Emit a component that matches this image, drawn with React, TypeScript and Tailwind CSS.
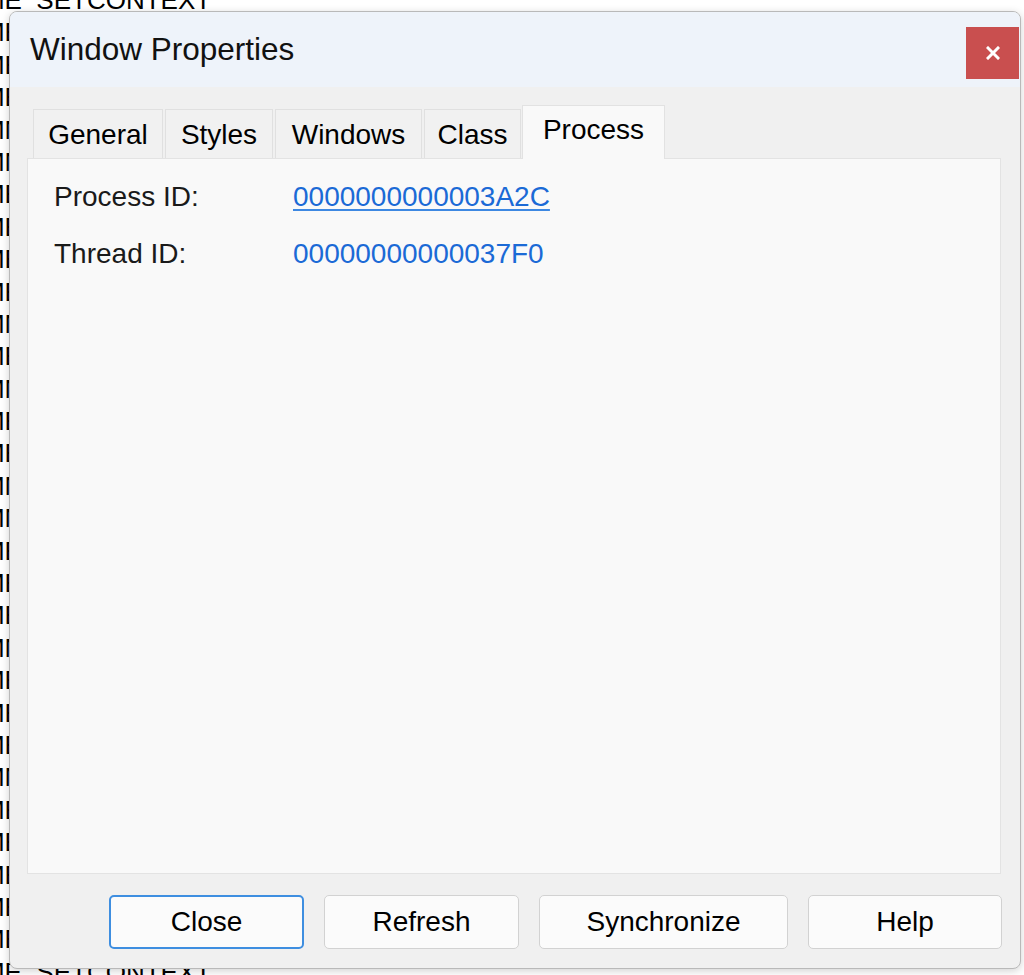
import { useState } from 'react';

const logLines = [
  'WM_IME_SETCONTEXT',
  'WM_IME_NOTIFY',
  'WM_IME_SETCONTEXT',
  'WM_IME_NOTIFY',
  'WM_IMM_ACTIVATE',
  'WM_IMM_ACTIVATE',
  'WM_IME_SETCONTEXT',
  'WM_IME_NOTIFY',
  'WM_IME_SETCONTEXT',
  'WM_IME_NOTIFY',
  'WM_IMM_ACTIVATE',
  'WM_IME_NOTIFY',
  'WM_IMM_ACTIVATE',
  'WM_IME_SETCONTEXT',
  'WM_IME_NOTIFY',
  'WM_IMM_ACTIVATE',
  'WM_IMM_ACTIVATE',
  'WM_IME_NOTIFY',
  'WM_IME_SETCONTEXT',
  'WM_IME_NOTIFY',
  'WM_IMM_ACTIVATE',
  'WM_IME_NOTIFY',
  'WM_IME_SETCONTEXT',
  'WM_IME_NOTIFY',
  'WM_IMM_ACTIVATE',
  'WM_IME_NOTIFY',
  'WM_IME_SETCONTEXT',
  'WM_IME_SETCONTEXT',
  'WM_IME_NOTIFY',
  'WM_IME_SETCONTEXT',
  'WM_IME_SETCONTEXT',
];

const tabs = [
  { name: 'General', w: 'w-[130px]', ml: '' },
  { name: 'Styles', w: 'w-[108px]', ml: 'ml-[2px]' },
  { name: 'Windows', w: 'w-[147px]', ml: 'ml-[2px]' },
  { name: 'Class', w: 'w-[97px]', ml: 'ml-[2px]' },
  { name: 'Process', w: 'w-[143px]', ml: 'ml-[1px]' },
];

const buttons = [
  { label: 'Close', w: 'w-[195px]', primary: true },
  { label: 'Refresh', w: 'w-[195px]', primary: false },
  { label: 'Synchronize', w: 'w-[249px]', primary: false },
  { label: 'Help', w: 'w-[194px]', primary: false },
];

export default function App() {
  const [activeTab, setActiveTab] = useState('Process');
  const last = logLines.length - 1;

  return (
    <div className="relative w-[1024px] h-[975px] bg-white overflow-hidden font-['Liberation_Sans',Arial,sans-serif] text-black">
      {/* message log behind the dialog: only the strip left of the dialog shows */}
      <div className="absolute left-0 top-[-16px] flex flex-col">
        {logLines.map((line, i) => (
          <div
            key={i}
            className={
              i === 0 || i === last
                ? 'h-[32.4px] leading-[32.4px] text-[26px] whitespace-nowrap w-[240px] overflow-hidden'
                : 'h-[32.4px] leading-[32.4px] text-[26px] whitespace-nowrap w-[9px] overflow-hidden'
            }
          >
            <span className="block ml-[-85px]">{line}</span>
          </div>
        ))}
      </div>

      <div className="absolute left-[9px] top-[11px] w-[1012px] h-[958px] flex flex-col rounded-[8px] border border-[#b9b9b9] bg-[#f0f0f0] shadow-[0_2px_8px_rgba(0,0,0,0.18)] overflow-hidden">
        <div className="h-[75px] flex items-start bg-[#eef3fa] pl-[20px]">
          <div className="self-center text-[31.5px] leading-none text-[#111]">Window Properties</div>
          <button className="ml-auto mt-[15px] mr-[1px] w-[53px] h-[52px] bg-[#c94f4f] grid place-items-center">
            <svg width="14" height="14" viewBox="0 0 14 14">
              <path d="M2 2 L12 12 M12 2 L2 12" stroke="white" strokeWidth="3" strokeLinecap="square" />
            </svg>
          </button>
        </div>

        <div className="flex-1 flex flex-col pl-[17px] pr-[19px] pt-[18px] pb-[19px]">
          <div className="flex items-end pl-[6px] h-[53px]">
            {tabs.map((t) => {
              const selected = t.name === activeTab;
              return (
                <button
                  key={t.name}
                  onClick={() => setActiveTab(t.name)}
                  className={
                    selected
                      ? `${t.w} ${t.ml} h-[54px] -mb-[1px] relative z-10 bg-[#f9f9f9] border border-b-0 border-[#e2e2e2] text-[28px] leading-none pb-[6px]`
                      : `${t.w} ${t.ml} h-[49px] bg-[#f1f1f1] border border-b-0 border-[#e0e0e0] text-[28px] leading-none pt-[2px]`
                  }
                >
                  {t.name}
                </button>
              );
            })}
          </div>

          <div className="flex-1 bg-[#f9f9f9] border border-[#e3e3e3] pl-[26px] pt-[9px]">
            <div className="flex items-center h-[57px] text-[28px]">
              <div className="w-[239px] text-[#1a1a1a]">Process ID:</div>
              <a className="text-[#1b6ad6] underline decoration-[#3d88e2] decoration-2 underline-offset-[3px] cursor-pointer">
                0000000000003A2C
              </a>
            </div>
            <div className="flex items-center h-[57px] text-[28px]">
              <div className="w-[239px] text-[#1a1a1a]">Thread ID:</div>
              <div className="text-[#1b6ad6]">00000000000037F0</div>
            </div>
          </div>

          <div className="flex justify-end gap-[20px] mt-[21px] mr-[-1px]">
            {buttons.map((b) => (
              <button
                key={b.label}
                className={
                  b.primary
                    ? `${b.w} h-[54px] rounded-[5px] bg-[#fbfbfb] border-2 border-[#3e8ee0] text-[28px]`
                    : `${b.w} h-[54px] rounded-[5px] bg-[#fbfbfb] border border-[#d2d2d2] text-[28px]`
                }
              >
                {b.label}
              </button>
            ))}
          </div>
        </div>
      </div>
    </div>
  );
}
